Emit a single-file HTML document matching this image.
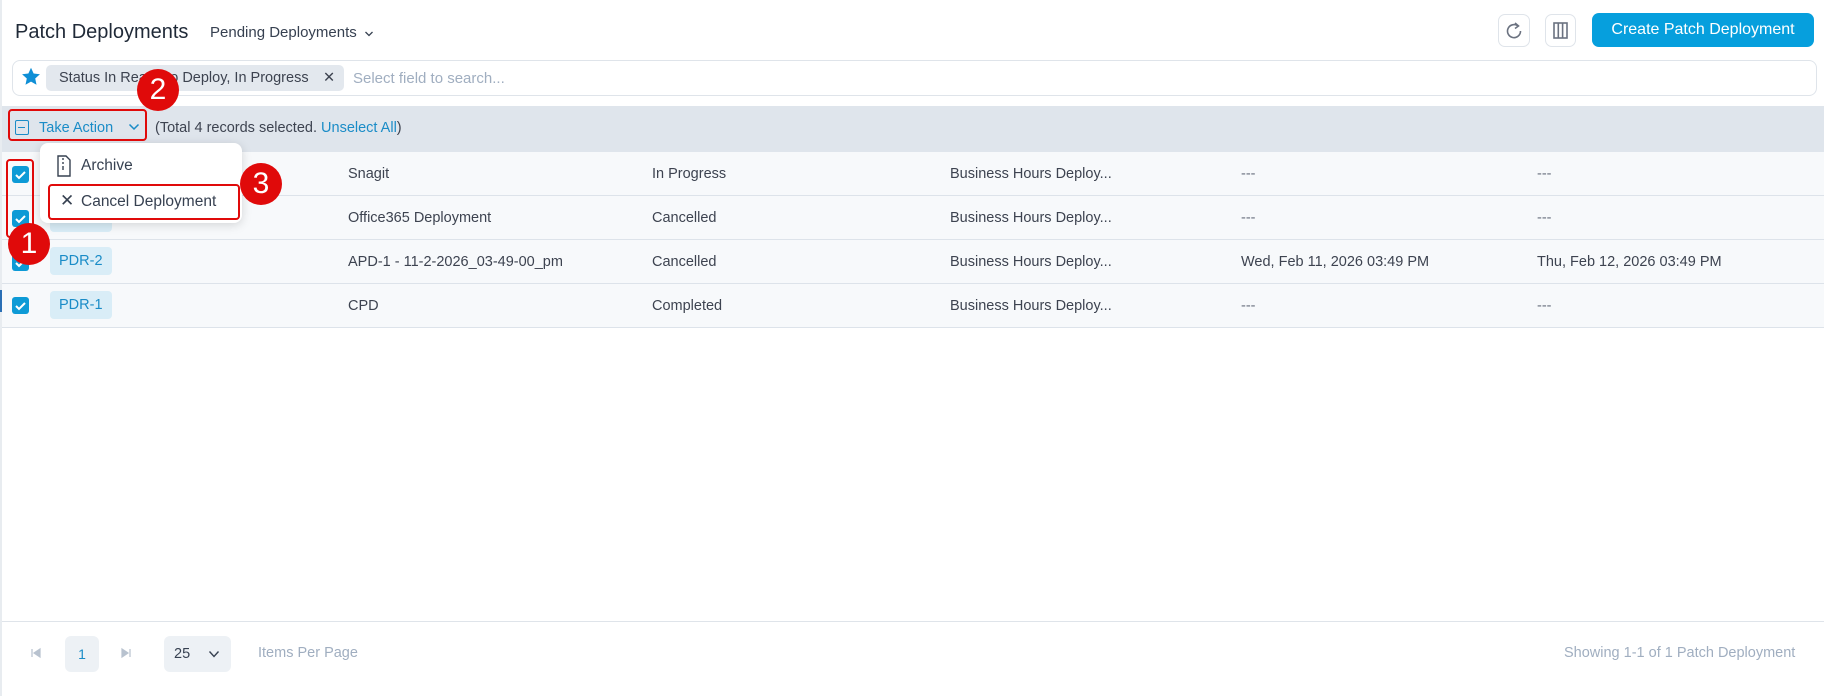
<!DOCTYPE html>
<html><head><meta charset="utf-8"><style>
*{box-sizing:border-box;margin:0;padding:0}
body{width:1824px;height:696px;background:#fff;font-family:"Liberation Sans",sans-serif;position:relative;overflow:hidden;color:#3a4150}
.a{position:absolute}
.t{font-size:14.5px;color:#3d4350;white-space:nowrap}
.row{position:absolute;left:2px;right:0;height:44px;background:#f7f9fb;border-bottom:1px solid #dde3ea}
.cb{position:absolute;left:12px;width:17px;height:17px;background:#0d9ad6;border-radius:3px}
.cb svg{position:absolute;left:2px;top:2px}
.tag{position:absolute;left:50px;height:28px;padding:0 9px;line-height:28px;background:#d9edf7;color:#1a8cc7;border-radius:4px;font-size:14.5px}
.red{position:absolute;border:2.5px solid #e00a0a;border-radius:4px}
.circ{position:absolute;width:42px;height:42px;border-radius:50%;background:#e00a0a;color:#fff;font-size:30px;text-align:center;line-height:42px}
</style></head><body>
<div class="a" style="left:0;top:0;width:2px;height:696px;background:#e8ecf0"></div>
<div class="a" style="left:0;top:290px;width:2px;height:22px;background:#2a6fb5"></div>
<div class="a t" style="left:15px;top:21px;font-size:20px;color:#1f2937">Patch Deployments</div>
<div class="a t" style="left:210px;top:24px;font-size:15px;color:#374151">Pending Deployments</div>
<svg class="a" style="left:364px;top:30px" width="10" height="8"><path d="M1.5 2l3.5 3.5L8.5 2" fill="none" stroke="#374151" stroke-width="1.3"/></svg>
<div class="a" style="left:1498px;top:14px;width:32px;height:33px;border:1px solid #dfe4ea;border-radius:7px"><svg width="30" height="31" viewBox="0 0 30 31"><path d="M19 11 A6.5 6.5 0 1 0 21.5 16" fill="none" stroke="#6b7280" stroke-width="1.6"/><path d="M16 8 L19.5 11 L16 13.5" fill="none" stroke="#6b7280" stroke-width="1.6"/></svg></div>
<div class="a" style="left:1545px;top:14px;width:31px;height:33px;border:1px solid #dfe4ea;border-radius:7px"><svg width="29" height="31" viewBox="0 0 29 31"><rect x="8" y="8" width="13" height="15" fill="none" stroke="#6b7280" stroke-width="1.6"/><path d="M12.3 8V23M16.6 8V23" stroke="#6b7280" stroke-width="1.6"/></svg></div>
<div class="a" style="left:1592px;top:13px;width:222px;height:34px;background:#069fdd;border-radius:7px;color:#fff;font-size:16px;text-align:center;line-height:34px">Create Patch Deployment</div>
<div class="a" style="left:12px;top:60px;width:1805px;height:36px;border:1px solid #dfe4ea;border-radius:8px"></div>
<svg class="a" style="left:20px;top:66px" width="22" height="21" viewBox="0 0 24 24"><path d="M12 2l3 6.6 7.2.8-5.4 4.9 1.5 7.1L12 17.8 5.7 21.4l1.5-7.1L1.8 9.4 9 8.6z" fill="#0f8fd6"/></svg>
<div class="a t" style="left:46px;top:65px;width:298px;height:26px;background:#e3e8ee;border-radius:5px;padding-left:13px;line-height:26px;font-size:14.5px">Status In Ready to Deploy, In Progress <span style="position:absolute;left:277px">✕</span></div>
<div class="a t" style="left:353px;top:70px;color:#a0aec0;font-size:15px">Select field to search...</div>
<div class="a" style="left:2px;top:106px;width:1822px;height:46px;background:#dfe5ec"></div>
<div class="a" style="left:15px;top:120px;width:14px;height:15px;border:1.5px solid #1a8cc7;border-radius:2px"><div style="position:absolute;left:2px;top:5.5px;width:7px;height:1.5px;background:#1a8cc7"></div></div>
<div class="a t" style="left:39px;top:120px;color:#1a8cc7;font-size:14.5px">Take Action</div>
<svg class="a" style="left:128px;top:122px" width="12" height="10"><path d="M1.5 2.5l4.5 4.5 4.5-4.5" fill="none" stroke="#1a8cc7" stroke-width="1.5"/></svg>
<div class="a t" style="left:155px;top:120px;font-size:14.5px">(Total 4 records selected. <span style="color:#1a8cc7">Unselect All</span>)</div>

<div class="row" style="top:152px"></div>
<div class="row" style="top:196px"></div>
<div class="row" style="top:240px"></div>
<div class="row" style="top:284px"></div>
<div class="cb" style="top:166px"><svg width="13" height="13"><path d="M2 7l3 3 6-6" fill="none" stroke="#fff" stroke-width="2"/></svg></div>
<div class="cb" style="top:210px"><svg width="13" height="13"><path d="M2 7l3 3 6-6" fill="none" stroke="#fff" stroke-width="2"/></svg></div>
<div class="cb" style="top:254px"><svg width="13" height="13"><path d="M2 7l3 3 6-6" fill="none" stroke="#fff" stroke-width="2"/></svg></div>
<div class="cb" style="top:297px"><svg width="13" height="13"><path d="M2 7l3 3 6-6" fill="none" stroke="#fff" stroke-width="2"/></svg></div>
<div class="tag" style="top:204px;color:transparent">PDR-3</div>
<div class="tag" style="top:247px">PDR-2</div>
<div class="tag" style="top:291px">PDR-1</div>
<div class="a t" style="left:348px;top:166px">Snagit</div>
<div class="a t" style="left:348px;top:210px">Office365 Deployment</div>
<div class="a t" style="left:348px;top:254px">APD-1 - 11-2-2026_03-49-00_pm</div>
<div class="a t" style="left:348px;top:298px">CPD</div>
<div class="a t" style="left:652px;top:166px">In Progress</div>
<div class="a t" style="left:652px;top:210px">Cancelled</div>
<div class="a t" style="left:652px;top:254px">Cancelled</div>
<div class="a t" style="left:652px;top:298px">Completed</div>
<div class="a t" style="left:950px;top:166px">Business Hours Deploy...</div>
<div class="a t" style="left:950px;top:210px">Business Hours Deploy...</div>
<div class="a t" style="left:950px;top:254px">Business Hours Deploy...</div>
<div class="a t" style="left:950px;top:298px">Business Hours Deploy...</div>
<div class="a t" style="left:1241px;top:166px;color:#6b7280">---</div>
<div class="a t" style="left:1241px;top:210px;color:#6b7280">---</div>
<div class="a t" style="left:1241px;top:254px">Wed, Feb 11, 2026 03:49 PM</div>
<div class="a t" style="left:1241px;top:298px;color:#6b7280">---</div>
<div class="a t" style="left:1537px;top:166px;color:#6b7280">---</div>
<div class="a t" style="left:1537px;top:210px;color:#6b7280">---</div>
<div class="a t" style="left:1537px;top:254px">Thu, Feb 12, 2026 03:49 PM</div>
<div class="a t" style="left:1537px;top:298px;color:#6b7280">---</div>

<div class="a" style="left:40px;top:143px;width:202px;height:80px;background:#fff;border-radius:8px;box-shadow:0 2px 10px rgba(0,0,0,.15)"></div>
<svg class="a" style="left:56px;top:155px" width="16" height="22" viewBox="0 0 16 22"><path d="M2 1h8l4 4v16H2z" fill="none" stroke="#374151" stroke-width="1.4"/><path d="M7 3v2M7 7v2M7 11v4" stroke="#374151" stroke-width="1.4"/></svg>
<div class="a t" style="left:81px;top:157px;font-size:15.5px;color:#374151">Archive</div>
<div class="a t" style="left:60px;top:191px;font-size:17px;color:#374151">✕</div>
<div class="a t" style="left:81px;top:193px;font-size:15.5px;color:#374151">Cancel Deployment</div>

<div class="red" style="left:8px;top:109px;width:139px;height:32px"></div>
<div class="red" style="left:6px;top:159px;width:28px;height:79px"></div>
<div class="red" style="left:48px;top:184px;width:192px;height:36px"></div>
<div class="circ" style="left:137px;top:69px">2</div>
<div class="circ" style="left:8px;top:223px">1</div>
<div class="circ" style="left:240px;top:163px">3</div>

<div class="a" style="left:2px;top:621px;width:1822px;height:1px;background:#dfe4ea"></div>
<svg class="a" style="left:30px;top:647px" width="12" height="12"><path d="M2 2v8M10 2L4 6l6 4z" fill="#b8c2cf" stroke="#b8c2cf" stroke-width="1.2"/></svg>
<div class="a" style="left:65px;top:636px;width:34px;height:36px;background:#edf1f5;border-radius:6px;text-align:center;line-height:36px;font-size:14px;color:#1a8cc7">1</div>
<svg class="a" style="left:120px;top:647px" width="12" height="12"><path d="M10 2v8M2 2l6 4-6 4z" fill="#b8c2cf" stroke="#b8c2cf" stroke-width="1.2"/></svg>
<div class="a" style="left:164px;top:636px;width:67px;height:36px;background:#edf1f5;border-radius:6px;font-size:14.5px;line-height:36px;padding-left:10px;color:#374151">25</div>
<svg class="a" style="left:208px;top:650px" width="12" height="9"><path d="M1.5 1.5l4.5 5 4.5-5" fill="none" stroke="#374151" stroke-width="1.4"/></svg>
<div class="a t" style="left:258px;top:645px;color:#a0aec0">Items Per Page</div>
<div class="a t" style="left:1564px;top:645px;color:#a0aec0">Showing 1-1 of 1 Patch Deployment</div>
</body></html>
